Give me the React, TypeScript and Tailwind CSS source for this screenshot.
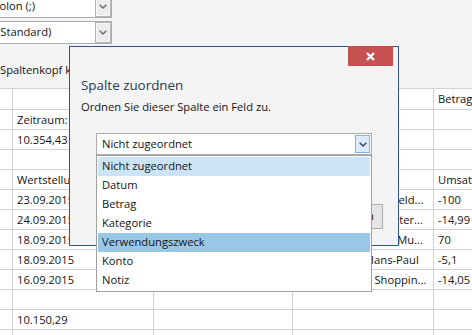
import React from "react";

const Chevron = ({ color = "#6b6b6b" }: { color?: string }) => (
  <svg width="8" height="5" viewBox="0 0 8 5">
    <path d="M0.7 0.7 L4 4 L7.3 0.7" fill="none" stroke={color} strokeWidth="1.4" />
  </svg>
);

const rows: string[][] = [
  ["", "", "", "Betrag"],
  ["Zeitraum:", "", "", ""],
  ["10.354,43", "", "", ""],
  ["", "", "", ""],
  ["Wertstellung", "Buchungstext", "Empfänger", "Umsatz"],
  ["23.09.2015", "Auszahlung", "Barauszahlungen Geld...", "-100"],
  ["24.09.2015", "Lastschrift", "Tankstelle Esso Center...", "-14,99"],
  ["18.09.2015", "Gutschrift", "Lohn/Gehalt Firma Mu...", "70"],
  ["18.09.2015", "Lastschrift", "Apotheke St. Hans-Paul", "-5,1"],
  ["16.09.2015", "Lastschrift", "PayPal: Online Shoppin...", "-14,05"],
  ["", "", "", ""],
  ["10.150,29", "", "", ""],
  ["", "", "", ""],
];

const items = ["Nicht zugeordnet", "Datum", "Betrag", "Kategorie", "Verwendungszweck", "Konto", "Notiz"];

function TopCombo({ text, shift }: { text: string; shift: string }) {
  return (
    <div className="flex h-[23px] w-[112px] border border-l-0 border-[#abadb3] bg-white">
      <div className="flex flex-1 items-center overflow-hidden whitespace-nowrap">
        <span className={shift}>{text}</span>
      </div>
      <div className="flex w-[16px] items-center justify-center border border-[#b4b4b4] bg-[#ececec] shadow-[inset_0_0_0_1px_#f8f8f8]">
        <Chevron />
      </div>
    </div>
  );
}

export default function App() {
  return (
    <div className="relative h-[335px] w-[472px] overflow-hidden bg-[#f4f4f4] font-['Open_Sans',sans-serif] text-[11.2px] text-[#141414]">
      <div className="mt-[-5px] flex flex-col gap-[3px]">
        <TopCombo text="Semikolon (;)" shift="ml-[-32px]" />
        <TopCombo text="(Standard)" shift="ml-[-3px]" />
      </div>
      <div className="mt-[18px] h-[16px] whitespace-nowrap leading-[16px]">Spaltenkopf kann zugeordnet werden</div>

      <div className="mt-[10px] border-t border-[#d0d0d0] bg-white">
        {rows.map((r, i) => (
          <div key={i} className={`flex border-b border-[#d0d0d0] ${i === 0 ? "h-[21px]" : "h-[20px]"}`}>
            <div className="w-[13px] shrink-0 border-r border-[#d0d0d0]" />
            <div className="flex w-[141px] shrink-0 items-center overflow-hidden whitespace-nowrap border-r border-[#d0d0d0] pl-[4px] pt-[1px]">{r[0]}</div>
            <div className="flex w-[139px] shrink-0 items-center overflow-hidden whitespace-nowrap border-r border-[#d0d0d0] pl-[4px] pt-[1px]">{r[1]}</div>
            <div className="flex w-[141px] shrink-0 items-center overflow-hidden whitespace-nowrap border-r border-[#d0d0d0] pl-[4px] pt-[1px]">{r[2]}</div>
            <div className="flex flex-1 items-center overflow-hidden whitespace-nowrap pl-[4px] pt-[1px]">{r[3]}</div>
          </div>
        ))}
      </div>

      {/* Dialog */}
      <div className="absolute left-[69px] top-[46px] h-[200px] w-[330px] border border-[#2b579a] bg-[#f4f4f4]">
        <div className="absolute right-[5px] top-[-1px] flex h-[20px] w-[45px] items-center justify-center bg-[#c75050]">
          <svg width="9" height="9" viewBox="0 0 9 9">
            <path d="M1 1 L8 8 M8 1 L1 8" stroke="#ffffff" strokeWidth="2.3" />
          </svg>
        </div>
        <div className="pl-[11px] pt-[29px]">
          <div className="text-[13.4px] leading-[18px] text-[#283b5a]">Spalte zuordnen</div>
          <div className="mt-[5px] leading-[16px]">Ordnen Sie dieser Spalte ein Feld zu.</div>
        </div>
        <div className="ml-[26px] mt-[18px] flex h-[22px] w-[276px] border border-[#acacac] bg-white">
          <div className="flex flex-1 items-center pl-[5px]">Nicht zugeordnet</div>
          <div className="my-[1px] mr-[1px] flex h-[18px] w-[15px] items-center justify-center border border-[#7eb4ea] bg-[#dcecfc]">
            <Chevron color="#404040" />
          </div>
        </div>
        <div className="mr-[15px] mt-[49px] flex justify-end gap-[8px]">
          <div className="flex h-[25px] w-[75px] items-center justify-center border border-[#adadad] bg-[#e5e5e5]">OK</div>
          <div className="flex h-[25px] w-[75px] items-center justify-center border border-[#adadad] bg-[#e5e5e5]">Abbrechen</div>
        </div>
      </div>

      {/* Dropdown list */}
      <div className="absolute left-[96px] top-[155px] h-[137px] w-[276px] border border-[#a0a0a0] bg-white p-[1px]">
        {items.map((it, i) => (
          <div
            key={it}
            className={`flex h-[19px] items-center pl-[4px] ${i === 0 ? "bg-[#cce4f7]" : i === 4 ? "bg-[#99c8e7]" : ""}`}
          >
            {it}
          </div>
        ))}
      </div>
    </div>
  );
}
